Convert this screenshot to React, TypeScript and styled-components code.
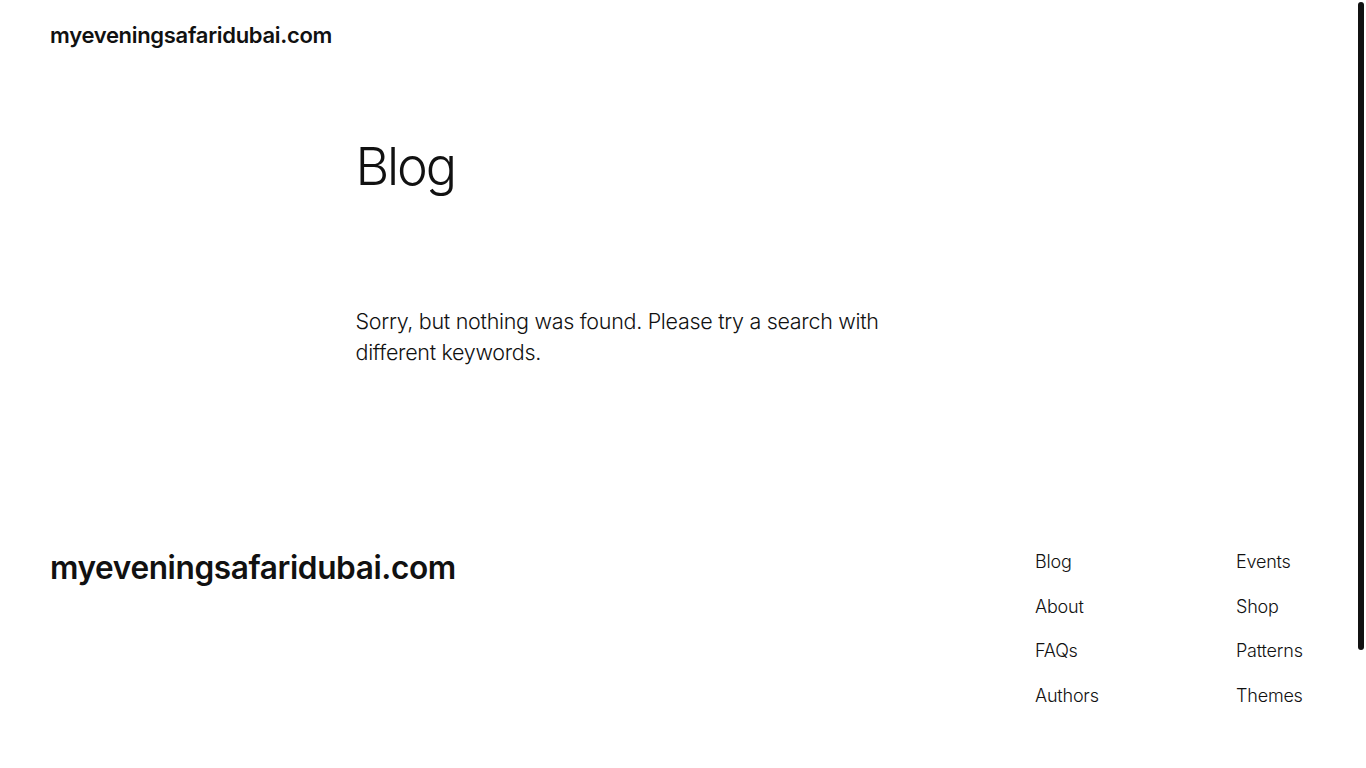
import React from "react";
import styled, { createGlobalStyle } from "styled-components";

const GlobalStyle = createGlobalStyle`
  html, body {
    margin: 0;
    padding: 0;
    height: 100%;
    overflow: hidden;
    background: #ffffff;
    color: #111111;
    font-family: Inter, "Noto Sans", "Liberation Sans", sans-serif;
  }
`;

// page area leaves room for the window's scrollbar on the right
const Page = styled.div`
  display: flex;
  flex-direction: column;
  min-height: 910px;
  margin-right: 8px;
`;

// dark scrollbar thumb drawn over the right edge
const ScrollThumb = styled.div`
  position: fixed;
  top: 2px;
  right: 2px;
  width: 6px;
  height: 648px;
  border-radius: 3px;
  background: #111111;
`;

const Header = styled.header`
  display: flex;
  align-items: center;
  padding: 20px 50px;
`;

const SiteTitle = styled.a<{ $big?: boolean }>`
  color: #111111;
  text-decoration: none;
  font-size: ${(p) => (p.$big ? "31.6px" : "22px")};
  font-weight: 600;
  letter-spacing: ${(p) => (p.$big ? "-0.4px" : "-0.3px")};
  line-height: 1.4;
`;

const Main = styled.main`
  width: 645px;
  margin: 0 auto;
  padding-top: 65px;
  padding-bottom: 178px;
`;

const Title = styled.h1`
  margin: 0 0 0 -1px;
  font-size: 52px;
  font-weight: 300;
  letter-spacing: -2.2px;
  line-height: 1.2;
`;

const Notice = styled.p`
  margin: 108px 0 0 -1px;
  font-size: 21.5px;
  font-weight: 300;
  line-height: 31px;
  letter-spacing: -0.3px;
  max-width: 560px;
`;

const Footer = styled.footer`
  display: flex;
  justify-content: space-between;
  align-items: flex-start;
  padding: 0 50px 140px;
`;

const NavGroup = styled.div`
  display: flex;
  margin-top: 3px;
`;

const NavColumn = styled.ul`
  list-style: none;
  margin: 0;
  padding: 0;
  width: 201px;
  display: flex;
  flex-direction: column;
  gap: 19px;
  &:last-child {
    width: 72px;
  }
`;

const NavLink = styled.a`
  display: block;
  color: #111111;
  text-decoration: none;
  font-size: 18px;
  font-weight: 300;
  letter-spacing: -0.2px;
  line-height: 25.5px;
  white-space: nowrap;
`;

const left = ["Blog", "About", "FAQs", "Authors"];
const right = ["Events", "Shop", "Patterns", "Themes"];

export default function App() {
  return (
    <>
      <GlobalStyle />
      <Page>
        <Header>
          <SiteTitle href="#">myeveningsafaridubai.com</SiteTitle>
        </Header>
        <Main>
          <Title>Blog</Title>
          <Notice>
            Sorry, but nothing was found. Please try a search with different keywords.
          </Notice>
        </Main>
        <Footer>
          <SiteTitle href="#" $big>
            myeveningsafaridubai.com
          </SiteTitle>
          <NavGroup>
            <NavColumn>
              {left.map((l) => (
                <li key={l}>
                  <NavLink href="#">{l}</NavLink>
                </li>
              ))}
            </NavColumn>
            <NavColumn>
              {right.map((l) => (
                <li key={l}>
                  <NavLink href="#">{l}</NavLink>
                </li>
              ))}
            </NavColumn>
          </NavGroup>
        </Footer>
      </Page>
      <ScrollThumb />
    </>
  );
}
